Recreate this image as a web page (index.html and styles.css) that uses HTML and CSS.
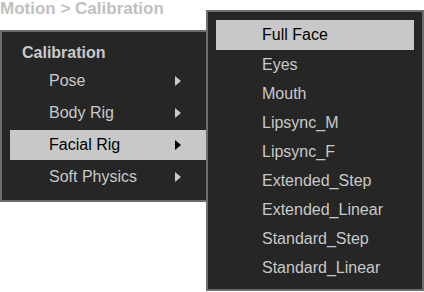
FILE: index.html
```html
<!DOCTYPE html>
<html lang="en">

<head>
    <meta charset="UTF-8">
    <meta name="viewport" content="width=device-width, initial-scale=1.0">
    <title>Motion &gt; Calibration</title>
    <link rel="stylesheet" href="styles.css">
</head>

<body>
    <div id="stage">
        <div id="left-col">
            <h1 class="crumb">Motion &gt; Calibration</h1>
            <div class="menu menu-main">
                <div class="menu-title">Calibration</div>
                <ul class="menu-list">
                    <li class="item has-sub"><span>Pose</span><i class="arrow"></i></li>
                    <li class="item has-sub"><span>Body Rig</span><i class="arrow"></i></li>
                    <li class="item has-sub active"><span>Facial Rig</span><i class="arrow"></i></li>
                    <li class="item has-sub"><span>Soft Physics</span><i class="arrow"></i></li>
                </ul>
            </div>
        </div>

        <div class="menu menu-sub">
            <ul class="menu-list">
                <li class="item active">Full Face</li>
                <li class="item">Eyes</li>
                <li class="item">Mouth</li>
                <li class="item">Lipsync_M</li>
                <li class="item">Lipsync_F</li>
                <li class="item">Extended_Step</li>
                <li class="item">Extended_Linear</li>
                <li class="item">Standard_Step</li>
                <li class="item">Standard_Linear</li>
            </ul>
        </div>
    </div>
</body>

</html>
```

FILE: styles.css
```css
* {
    box-sizing: border-box;
}

body {
    font-family: "Liberation Sans", Arial, Helvetica, sans-serif;
    background-color: #ffffff;
    margin: 0;
    padding: 0;
}

#stage {
    display: flex;
    align-items: flex-start;
}

#left-col {
    display: flex;
    flex-direction: column;
    width: 208px;
}

.crumb {
    margin: 0 0 13px;
    font-size: 17px;
    line-height: 17px;
    font-weight: bold;
    color: #c0c0c0;
    white-space: nowrap;
}

.menu {
    background-color: #262626;
    border: 2px solid #6e6e6e;
    color: #c9c9c9;
    font-size: 16px;
}

.menu-list {
    list-style: none;
    margin: 0;
    padding: 0;
}

.menu-main {
    width: 208px;
    height: 172px;
    padding: 0 0 8px 8px;
}

.menu-title {
    padding: 11px 0 0 12px;
    margin-bottom: 3px;
    line-height: 20px;
    font-weight: bold;
}

.menu-main .menu-list {
    display: flex;
    flex-direction: column;
    gap: 2px;
}

.menu-main .item {
    display: flex;
    align-items: center;
    justify-content: space-between;
    height: 30px;
    padding: 0 25px 0 39px;
}

.arrow {
    width: 0;
    height: 0;
    border-left: 6px solid currentColor;
    border-top: 5px solid transparent;
    border-bottom: 5px solid transparent;
}

.menu-sub {
    position: relative;
    z-index: 1;
    width: 218px;
    height: 281px;
    margin: 10px 0 0 -2px;
    padding: 8px 8px 7px;
}

.menu-sub .item {
    height: 29px;
    line-height: 29px;
    padding-left: 46px;
}

.menu-sub .item:first-child {
    height: 30px;
    line-height: 30px;
}

.item.active {
    background-color: #c8c8c8;
    color: #000000;
}
```
